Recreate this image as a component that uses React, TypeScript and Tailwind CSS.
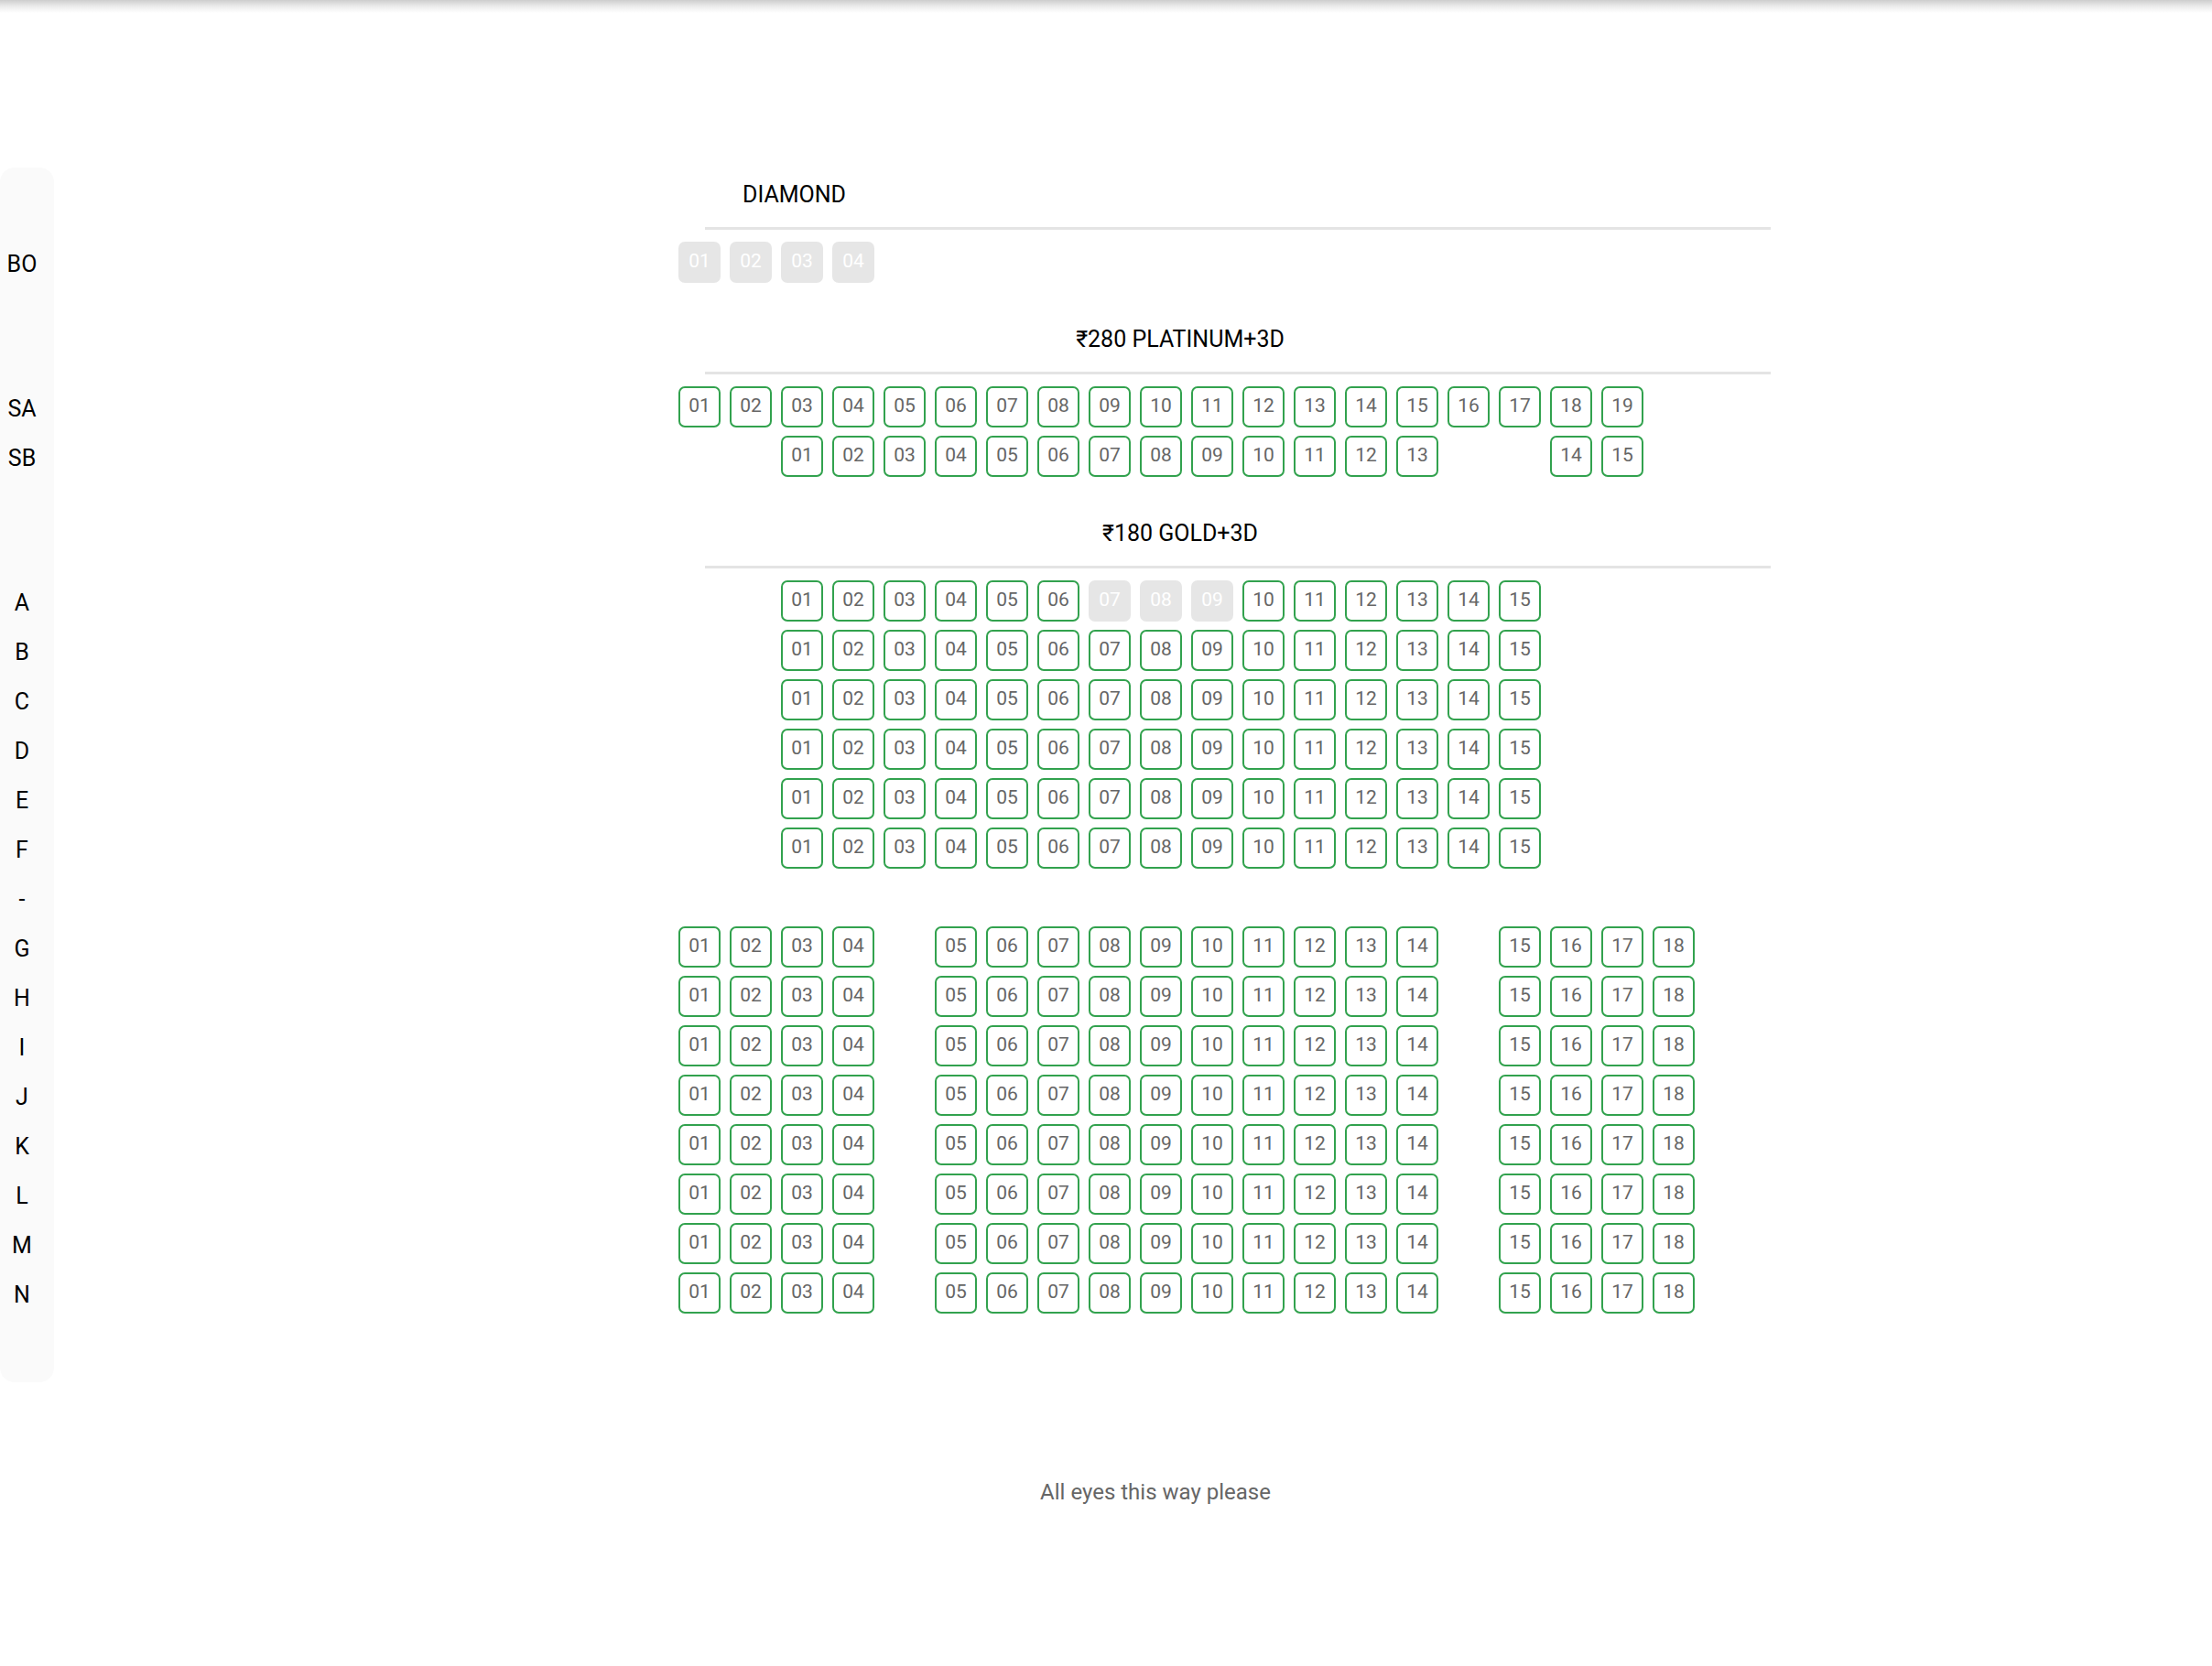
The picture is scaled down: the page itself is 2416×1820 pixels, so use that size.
import React from "react";

type Cell = { n: string; s: "a" | "d" } | null;

const pad = (n: number) => (n < 10 ? "0" + n : "" + n);

function range(a: number, b: number, disabled: number[] = []): Cell[] {
  const out: Cell[] = [];
  for (let i = a; i <= b; i++) out.push({ n: pad(i), s: disabled.includes(i) ? "d" : "a" });
  return out;
}
const blanks = (k: number): Cell[] => Array.from({ length: k }, () => null);

function Seat({ c }: { c: Cell }) {
  if (!c) return <div className="w-[46px] h-[45px] shrink-0" />;
  if (c.s === "d")
    return (
      <div className="w-[46px] h-[45px] shrink-0 rounded-[7px] bg-[#e6e6e6] text-white flex items-center justify-center text-[21px]">
        {c.n}
      </div>
    );
  return (
    <div className="w-[46px] h-[45px] shrink-0 rounded-[7px] border-2 border-[#32a24e] text-[#666666] flex items-center justify-center text-[21px]">
      {c.n}
    </div>
  );
}

function Row({ cells }: { cells: Cell[] }) {
  return (
    <div className="h-[54px] flex items-center gap-[10px]">
      {cells.map((c, i) => (
        <Seat key={i} c={c} />
      ))}
    </div>
  );
}

function Header({ title, left }: { title: string; left?: boolean }) {
  return (
    <div className="h-[104px] pt-[44px]">
      {left ? (
        <div className="h-[28px] leading-[28px] text-[25px] text-black pl-[70px]">{title}</div>
      ) : (
        <div className="h-[28px] leading-[28px] text-[25px] text-black w-[1096px] text-center">{title}</div>
      )}
      <div className="mt-[21px] ml-[29px] w-[1164px] h-[3px] bg-[#e4e4e4]" />
    </div>
  );
}

function Label({ t }: { t: string }) {
  return <div className="h-[54px] flex items-center justify-center w-[48px] text-[25px] text-black">{t}</div>;
}

export default function App() {
  const gold = ["A", "B", "C", "D", "E", "F"];
  const lower = ["G", "H", "I", "J", "K", "L", "M", "N"];
  return (
    <div
      className="min-h-screen w-full bg-white"
      style={{ fontFamily: 'Roboto, "Noto Sans", "Liberation Sans", sans-serif' }}
    >
      <div className="h-[14px] bg-linear-to-b from-[#cdcdcd] via-[#ececec] to-white" />
      <div className="flex items-start">
        <div className="w-[59px] shrink-0 mt-[169px] bg-[#fafafa] rounded-[16px] pt-[79px] pb-[68px]">
          <Label t="BO" />
          <div className="h-[104px]" />
          <Label t="SA" />
          <Label t="SB" />
          <div className="h-[104px]" />
          {gold.map((l) => (
            <Label key={l} t={l} />
          ))}
          <Label t="-" />
          {lower.map((l) => (
            <Label key={l} t={l} />
          ))}
        </div>
        <div className="ml-[682px] mt-[141px] flex flex-col">
          <Header title="DIAMOND" left />
          <Row cells={range(1, 4).map((c) => (c ? { ...c, s: "d" as const } : c))} />
          <Header title="₹280 PLATINUM+3D" />
          <Row cells={range(1, 19)} />
          <Row cells={[...blanks(2), ...range(1, 13), ...blanks(2), ...range(14, 15)]} />
          <Header title="₹180 GOLD+3D" />
          {gold.map((l) => (
            <Row key={l} cells={[...blanks(2), ...range(1, 15, l === "A" ? [7, 8, 9] : [])]} />
          ))}
          <Row cells={[]} />
          {lower.map((l) => (
            <Row
              key={l}
              cells={[...range(1, 4), ...blanks(1), ...range(5, 14), ...blanks(1), ...range(15, 18)]}
            />
          ))}
          <div className="mt-[177px] w-[1042px] text-center text-[24px] leading-[28px] text-[#666666]">
            All eyes this way please
          </div>
        </div>
      </div>
    </div>
  );
}
